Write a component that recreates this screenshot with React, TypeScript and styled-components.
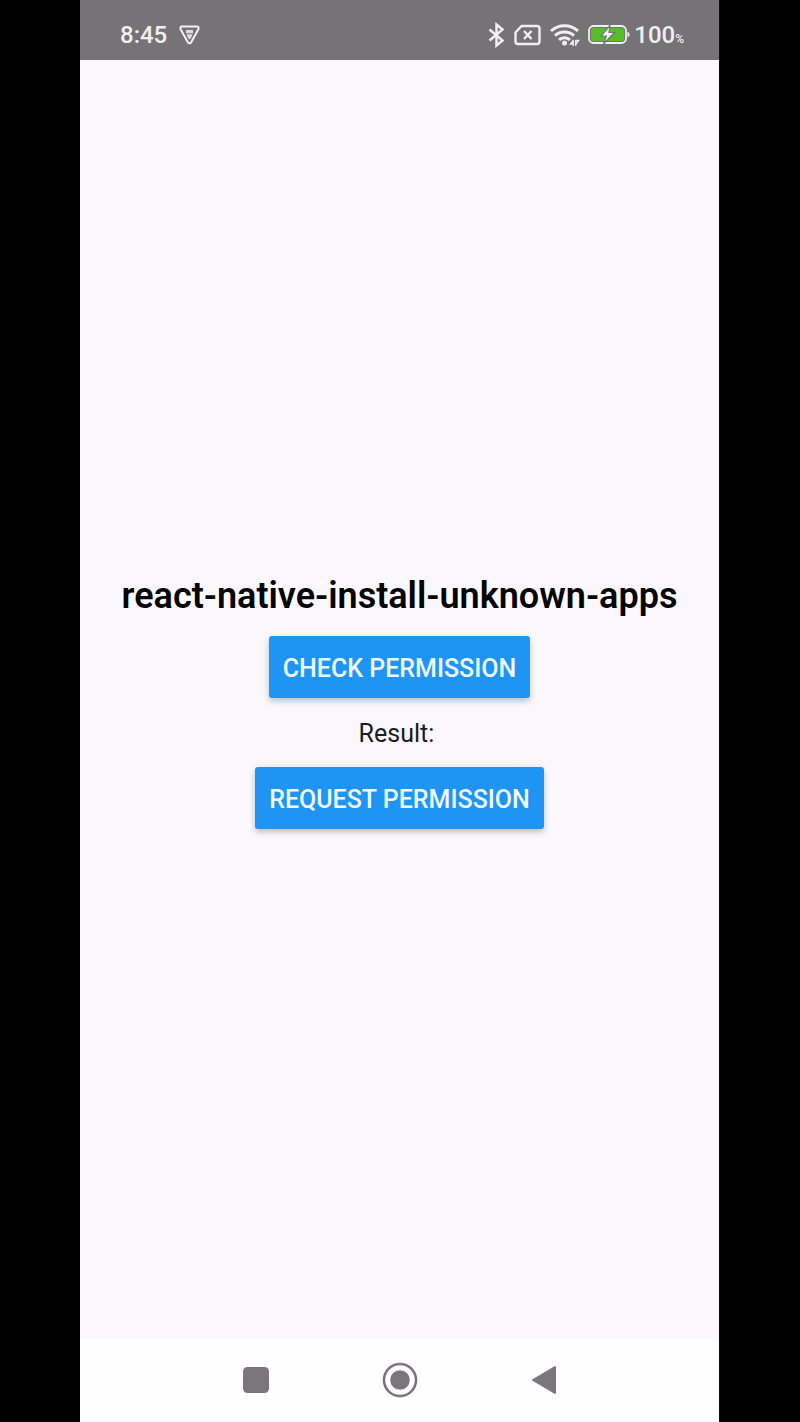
import React, { useState } from "react";
import styled, { createGlobalStyle } from "styled-components";

const GlobalStyle = createGlobalStyle`
  * {
    box-sizing: border-box;
  }
  body {
    margin: 0;
    background: #000;
    font-family: Roboto, "Liberation Sans", sans-serif;
  }
`;

const Stage = styled.div`
  display: flex;
  justify-content: center;
  min-height: 100vh;
  background: #000;
`;

const Phone = styled.div`
  display: flex;
  flex-direction: column;
  width: 80%;
  border-right: 1px solid #0c0c0c;
  background: #faf8fc;
`;

const StatusBar = styled.header`
  display: flex;
  align-items: center;
  justify-content: space-between;
  height: 60px;
  padding: 10px 35px 0 40px;
  background: #757376;
  color: #f0eff1;
`;

const StatusGroup = styled.div<{ $gap: number }>`
  display: flex;
  align-items: center;
  gap: ${({ $gap }) => $gap}px;
`;

const StatusText = styled.span`
  font-size: 24px;
  line-height: 28px;
  font-weight: 500;
`;

const Percent = styled.small`
  font-size: 12px;
  line-height: 12px;
  font-weight: 500;
`;

const Content = styled.main`
  flex: 1;
  display: flex;
  flex-direction: column;
  align-items: center;
  justify-content: center;
  padding-top: 2px;
`;

const Title = styled.h1`
  margin: 0 0 16px;
  font-size: 36px;
  line-height: 48px;
  font-weight: 600;
  color: #050505;
`;

const ActionButton = styled.button`
  height: 62px;
  padding: 3px 14px 0;
  border: 0;
  border-radius: 3px;
  background: #2094f3;
  box-shadow: 0 3px 6px rgba(0, 0, 0, 0.24);
  color: #eefaff;
  font-family: inherit;
  font-size: 25px;
  line-height: 30px;
  font-weight: 500;
  text-transform: uppercase;
  cursor: pointer;
`;

const Result = styled.p`
  margin: 0;
  padding: 21px 0 19px;
  font-size: 25px;
  line-height: 29px;
  color: #1c1b1e;
  white-space: pre;
`;

const NavBar = styled.nav`
  display: flex;
  align-items: center;
  justify-content: center;
  gap: 104px;
  height: 83px;
  padding-bottom: 2px;
  background: #fefdff;
`;

const NavButton = styled.button`
  display: flex;
  align-items: center;
  justify-content: center;
  width: 40px;
  height: 40px;
  padding: 0;
  border: 0;
  background: none;
  color: #7a777a;
  cursor: pointer;
`;

const ShieldIcon = () => (
  <svg width="22" height="20" viewBox="0 0 22 20" fill="none" stroke="currentColor" strokeLinejoin="round">
    <path d="M3 1.500h15c1.500 0 2 1.400 1.400 2.700l-7.200 13c-.8 1.400-2.600 1.400-3.400 0L1.600 4.200C1 2.900 1.500 1.500 3 1.500Z" strokeWidth="2" />
    <path d="M7 5h7v3.200H7ZM7.500 9.200h6L12 13l-1.500 1.500L9 13Z" fill="currentColor" stroke="none" opacity="0.850" />
  </svg>
);

const BluetoothIcon = () => (
  <svg width="18" height="26" viewBox="0 0 18 26" fill="none" stroke="currentColor" strokeWidth="2.500">
    <path d="M1.500 7.500 14.500 18.500 8.500 23.500v-21l6 5L1.500 18.500" />
  </svg>
);

const SimIcon = () => (
  <svg width="28" height="22" viewBox="0 0 28 22" fill="none" stroke="currentColor" strokeWidth="2.400" strokeLinejoin="round">
    <path d="M7.500 2h15.500a2.500 2.500 0 0 1 2.500 2.500v13a2.500 2.500 0 0 1-2.500 2.500h-19A2.500 2.500 0 0 1 1.500 17.500V8.500Z" />
    <path d="m10 7 7.500 8M17.500 7 10 15" />
  </svg>
);

const WifiIcon = () => (
  <svg width="30" height="24" viewBox="0 0 30 24" fill="none" stroke="currentColor" strokeWidth="3">
    <path d="M1 8c7.500-7 19.500-7 27 0" />
    <path d="M5 12.600c5.200-4.800 13.800-4.800 19 0" />
    <path d="M9 16.800c3-2.900 8-2.900 11 0" />
    <circle cx="14.500" cy="20" r="2.500" fill="currentColor" stroke="none" />
    <path d="M23.300 17v6M23.300 17.500 20.500 21h3M25.700 23v-6M25.700 17.500h3L25.700 21.500" strokeWidth="1.300" />
  </svg>
);

const BatteryIcon = () => (
  <svg width="42" height="22" viewBox="0 0 42 22" fill="none">
    <rect x="1" y="2" width="37" height="17" rx="4.500" stroke="currentColor" strokeWidth="1.800" />
    <rect x="3" y="4" width="33" height="13" rx="2" fill="#57bd27" />
    <path d="M39.500 8c1.300 0 2 .8 2 2.500s-.7 2.500-2 2.500Z" fill="currentColor" />
    <path d="m22 1.500-9 10.500h5.500L15.500 20l11-11.500h-5.500Z" fill="#f7f8fa" stroke="#757376" strokeWidth="1.200" />
  </svg>
);

const RecentsIcon = () => (
  <svg width="26" height="26" viewBox="0 0 26 26" fill="currentColor">
    <rect width="26" height="26" rx="4.500" />
  </svg>
);

const HomeIcon = () => (
  <svg width="36" height="36" viewBox="0 0 36 36" fill="none">
    <circle cx="18" cy="18" r="16" stroke="currentColor" strokeWidth="2.600" />
    <circle cx="18" cy="18" r="9.800" fill="currentColor" />
  </svg>
);

const BackIcon = () => (
  <svg width="26" height="30" viewBox="0 0 26 30" fill="currentColor" stroke="currentColor" strokeWidth="2" strokeLinejoin="round">
    <path d="M2 15 24 2v26Z" />
  </svg>
);

export default function App() {
  const [result, setResult] = useState("");

  return (
    <>
      <GlobalStyle />
      <Stage>
        <Phone>
          <StatusBar>
            <StatusGroup $gap={12}>
              <StatusText>8:45</StatusText>
              <ShieldIcon />
            </StatusGroup>
            <StatusGroup $gap={8}>
              <BluetoothIcon />
              <SimIcon />
              <WifiIcon />
              <StatusGroup $gap={4}>
                <BatteryIcon />
                <StatusText>
                  100<Percent>%</Percent>
                </StatusText>
              </StatusGroup>
            </StatusGroup>
          </StatusBar>
          <Content>
            <Title>react-native-install-unknown-apps</Title>
            <ActionButton type="button" onClick={() => setResult("false")}>
              Check permission
            </ActionButton>
            <Result>{`Result: ${result}`}</Result>
            <ActionButton type="button" onClick={() => setResult("true")}>
              Request permission
            </ActionButton>
          </Content>
          <NavBar>
            <NavButton type="button" aria-label="Recent apps">
              <RecentsIcon />
            </NavButton>
            <NavButton type="button" aria-label="Home">
              <HomeIcon />
            </NavButton>
            <NavButton type="button" aria-label="Back">
              <BackIcon />
            </NavButton>
          </NavBar>
        </Phone>
      </Stage>
    </>
  );
}
